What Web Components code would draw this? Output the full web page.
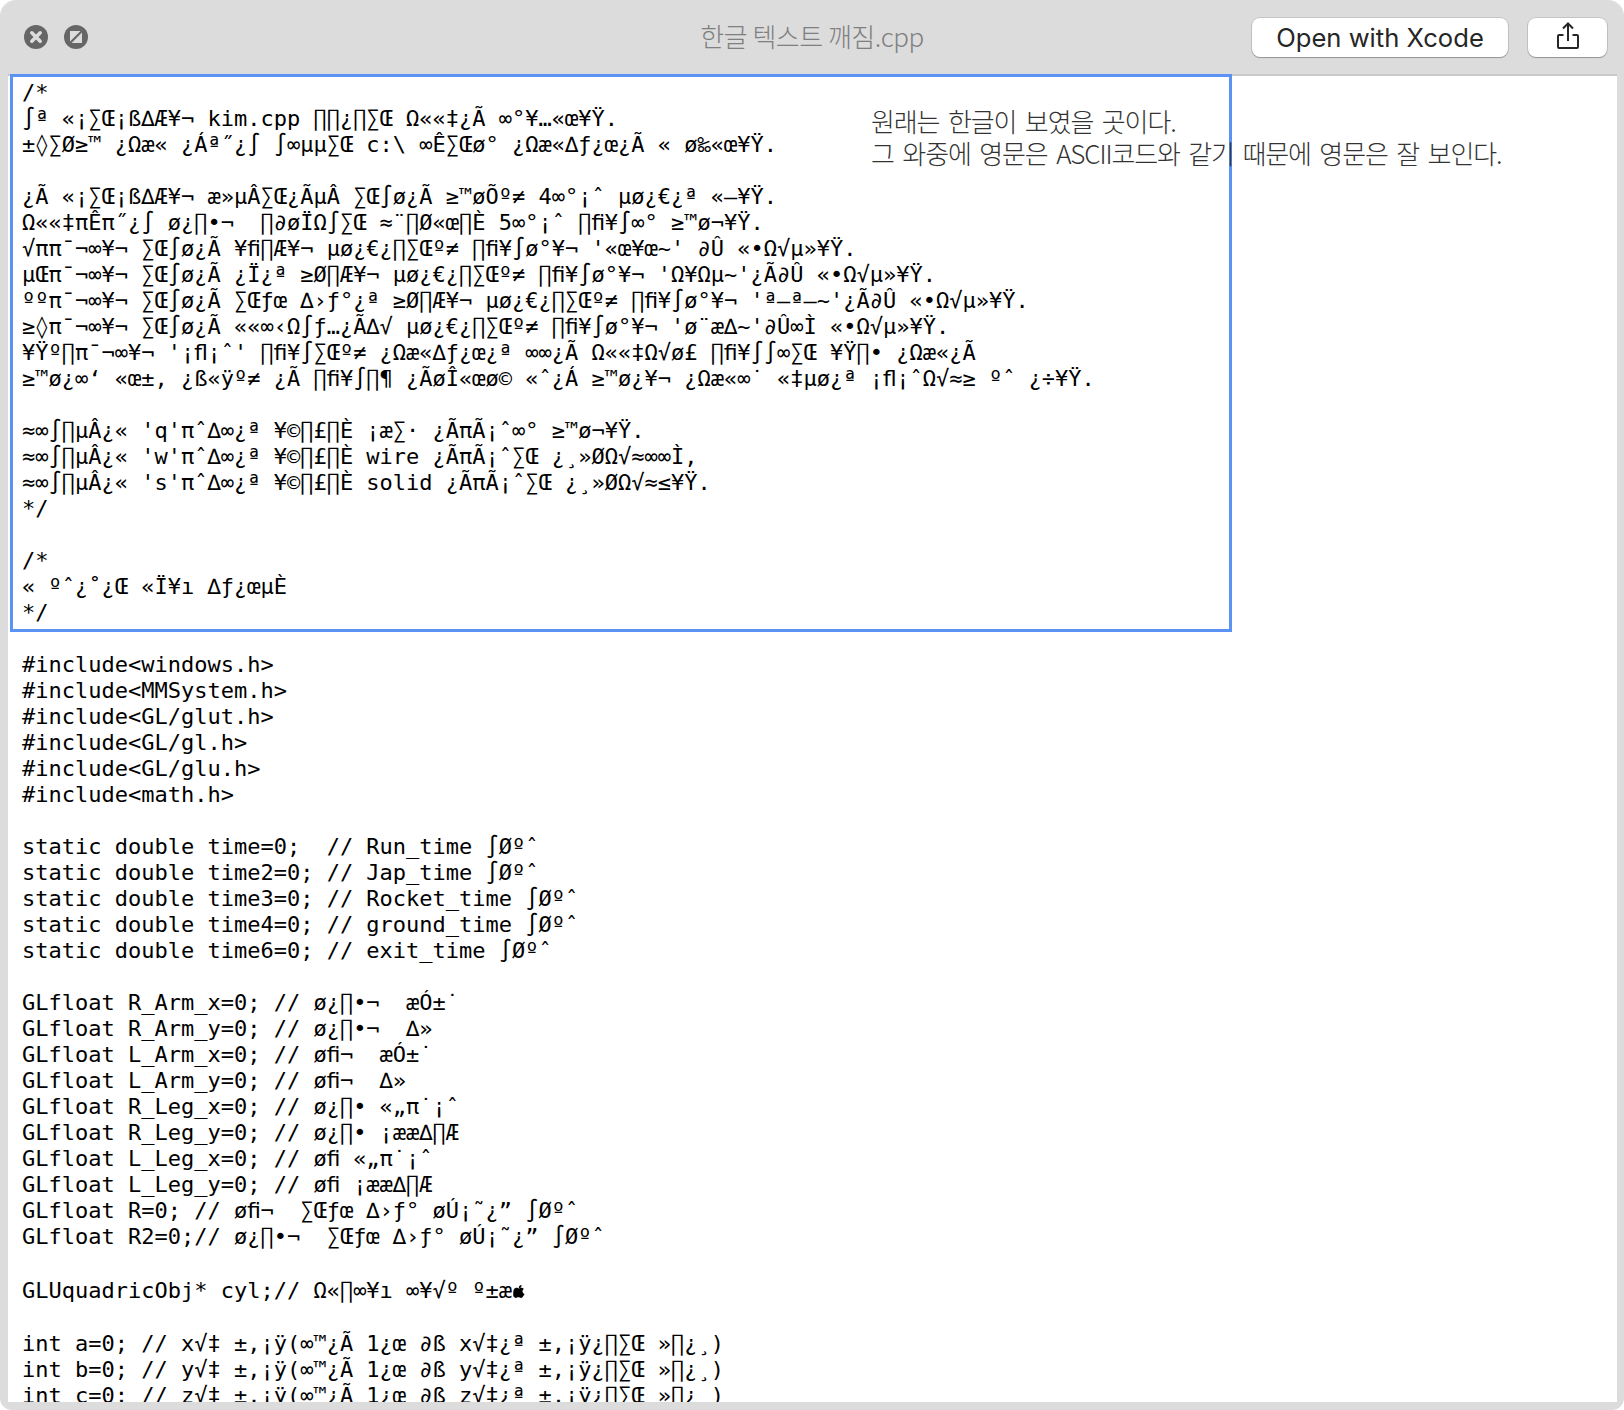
<!DOCTYPE html>
<html>
<head>
<meta charset="utf-8">
<title>한글 텍스트 깨짐.cpp</title>
<style>
  html, body { margin: 0; background: #fff; }
</style>
</head>
<body>
<ql-window name="한글 텍스트 깨짐.cpp">
  <source-pane>/*
∫ª «¡∑Œ¡ß∆Æ¥¬ kim.cpp ∏∏¿∏∑Œ Ω««‡¿Ã ∞°¥…«œ¥Ÿ.
±◊∑Ø≥™ ¿Ωæ« ¿Áª˝¿∫ ∫∞µµ∑Œ c:\ ∞Ê∑Œø° ¿Ωæ«∆ƒ¿œ¿Ã «&nbsp;ø‰«œ¥Ÿ.

¿Ã «¡∑Œ¡ß∆Æ¥¬ æ»µÂ∑Œ¿ÃµÂ ∑Œ∫ø¿Ã ≥™øÕº≠ 4∞°¡ˆ µø¿€¿ª «—¥Ÿ.
Ω««‡πÊπ˝¿∫ ø¿∏•¬&nbsp; ∏∂øÏΩ∫∑Œ ≈¨∏Ø«œ∏È 5∞°¡ˆ ∏ﬁ¥∫∞° ≥™ø¬¥Ÿ.
√ππ¯¬∞¥¬ ∑Œ∫ø¿Ã ¥ﬁ∏Æ¥¬ µø¿€¿∏∑Œº≠ ∏ﬁ¥∫ø°¥¬ '«œ¥œ~' ∂Û «•Ω√µ»¥Ÿ.
µŒπ¯¬∞¥¬ ∑Œ∫ø¿Ã ¿Ï¿ª ≥Ø∏Æ¥¬ µø¿€¿∏∑Œº≠ ∏ﬁ¥∫ø°¥¬ 'Ω¥Ωµ~'¿Ã∂Û «•Ω√µ»¥Ÿ.
ººπ¯¬∞¥¬ ∑Œ∫ø¿Ã ∑Œƒœ ∆›ƒ°¿ª ≥Ø∏Æ¥¬ µø¿€¿∏∑Œº≠ ∏ﬁ¥∫ø°¥¬ 'ª—ª—~'¿Ã∂Û «•Ω√µ»¥Ÿ.
≥◊π¯¬∞¥¬ ∑Œ∫ø¿Ã ««∞‹Ω∫ƒ…¿Ã∆√ µø¿€¿∏∑Œº≠ ∏ﬁ¥∫ø°¥¬ 'ø¨æ∆~'∂Û∞Ì «•Ω√µ»¥Ÿ.
¥Ÿº∏π¯¬∞¥¬ '¡ﬂ¡ˆ' ∏ﬁ¥∫∑Œº≠ ¿Ωæ«∆ƒ¿œ¿ª ∞∞¿Ã Ω««‡Ω√ø£ ∏ﬁ¥∫∫∞∑Œ ¥Ÿ∏• ¿Ωæ«¿Ã
≥™ø¿∞‘ «œ±‚ ¿ß«ÿº≠ ¿Ã ∏ﬁ¥∫∏¶ ¿ÃøÎ«œø© «ˆ¿Á ≥™ø¿¥¬ ¿Ωæ«∞˙ «‡µø¿ª ¡ﬂ¡ˆΩ√≈≥ ºˆ ¿÷¥Ÿ.

≈∞∫∏µÂ¿« 'q'πˆ∆∞¿ª ¥©∏£∏È ¡æ∑· ¿ÃπÃ¡ˆ∞° ≥™ø¬¥Ÿ.
≈∞∫∏µÂ¿« 'w'πˆ∆∞¿ª ¥©∏£∏È wire ¿ÃπÃ¡ˆ∑Œ ¿¸»ØΩ√≈∞∞Ì,
≈∞∫∏µÂ¿« 's'πˆ∆∞¿ª ¥©∏£∏È solid ¿ÃπÃ¡ˆ∑Œ ¿¸»ØΩ√≈≤¥Ÿ.
*/

/*
«&nbsp;ºˆ¿˚¿Œ «Ï¥ı ∆ƒ¿œµÈ
*/

#include&lt;windows.h&gt;
#include&lt;MMSystem.h&gt;
#include&lt;GL/glut.h&gt;
#include&lt;GL/gl.h&gt;
#include&lt;GL/glu.h&gt;
#include&lt;math.h&gt;

static double time=0;  // Run_time ∫Øºˆ
static double time2=0; // Jap_time ∫Øºˆ
static double time3=0; // Rocket_time ∫Øºˆ
static double time4=0; // ground_time ∫Øºˆ
static double time6=0; // exit_time ∫Øºˆ

GLfloat R_Arm_x=0; // ø¿∏•¬&nbsp; æÓ±˙
GLfloat R_Arm_y=0; // ø¿∏•¬&nbsp; ∆»
GLfloat L_Arm_x=0; // øﬁ¬&nbsp; æÓ±˙
GLfloat L_Arm_y=0; // øﬁ¬&nbsp; ∆»
GLfloat R_Leg_x=0; // ø¿∏• «„π˙¡ˆ
GLfloat R_Leg_y=0; // ø¿∏• ¡ææ∆∏Æ
GLfloat L_Leg_x=0; // øﬁ «„π˙¡ˆ
GLfloat L_Leg_y=0; // øﬁ ¡ææ∆∏Æ
GLfloat R=0; // øﬁ¬&nbsp; ∑Œƒœ ∆›ƒ° øÚ¡˜¿” ∫Øºˆ
GLfloat R2=0;// ø¿∏•¬&nbsp; ∑Œƒœ ∆›ƒ° øÚ¡˜¿” ∫Øºˆ

GLUquadricObj* cyl;// Ω«∏∞¥ı ∞¥√º º±æ<apple-mark></apple-mark>

int a=0; // x√‡ ±‚¡ÿ(∞™¿Ã 1¿œ ∂ß x√‡¿ª ±‚¡ÿ¿∏∑Œ »∏¿¸)
int b=0; // y√‡ ±‚¡ÿ(∞™¿Ã 1¿œ ∂ß y√‡¿ª ±‚¡ÿ¿∏∑Œ »∏¿¸)
int c=0; // z√‡ ±‚¡ÿ(∞™¿Ã 1¿œ ∂ß z√‡¿ª ±‚¡ÿ¿∏∑Œ »∏¿¸)</source-pane>
  <note-callout slot="over">원래는 한글이 보였을 곳이다.
그 와중에 영문은 ASCII코드와 같기 때문에 영문은 잘 보인다.</note-callout>
</ql-window>
<script>
class QlWindow extends HTMLElement {
  constructor() {
    super();
    this.attachShadow({mode: 'open'});
    this.shadowRoot.innerHTML = `
      <style>
        :host {
          display: flex;
          flex-direction: column;
          position: relative;
          height: 1410px;
          box-sizing: border-box;
          background: #dcdcdc;
          border-radius: 16px 16px 12px 12px;
          overflow: hidden;
        }
        .bar {
          display: grid;
          grid-template-columns: 1fr auto 1fr;
          align-items: center;
          height: 74px;
          flex: none;
          padding: 0 17px 0 24px;
          box-sizing: border-box;
        }
        .dots { display: flex; gap: 16px; }
        .name {
          color: #7f7f7f;
          font: 300 26px "Noto Sans CJK KR", "Noto Sans", sans-serif;
          letter-spacing: -0.5px;
          margin-right: 7px;
          position: relative;
          top: -2px;
        }
        .tools { display: flex; gap: 20px; justify-self: end; }
        .pane {
          flex: 1;
          min-height: 0;
          margin: 0 7px 8px 8px;
          border-top: 2px solid #c9c9c9;
          background: #fff;
          overflow: hidden;
        }
      </style>
      <div class="bar">
        <div class="dots">
          <round-icon kind="close"></round-icon>
          <round-icon kind="full"></round-icon>
        </div>
        <div class="name">${this.getAttribute('name')}</div>
        <div class="tools">
          <ql-button wide>Open with Xcode</ql-button>
          <ql-button><share-icon></share-icon></ql-button>
        </div>
      </div>
      <div class="pane"><slot></slot></div>
      <slot name="over"></slot>
    `;
  }
}

class RoundIcon extends HTMLElement {
  constructor() {
    super();
    this.attachShadow({mode: 'open'});
    const mark = this.getAttribute('kind') === 'close'
      ? '<path d="M7.800 7.800l8.400 8.400M16.200 7.800l-8.400 8.400" stroke="#dcdcdc" stroke-width="3.600" stroke-linecap="round"/>'
      : '<path d="M6 6H16.500L6 16.500zM18 18H7.500L18 7.500z" fill="#dcdcdc"/>';
    this.shadowRoot.innerHTML = `
      <style>:host { display: block; width: 24px; height: 24px; } svg { display: block; }</style>
      <svg width="24" height="24" viewBox="0 0 24 24"><circle cx="12" cy="12" r="12" fill="#666"/>${mark}</svg>
    `;
  }
}

class QlButton extends HTMLElement {
  constructor() {
    super();
    this.attachShadow({mode: 'open'});
    this.shadowRoot.innerHTML = `
      <style>
        :host {
          display: flex;
          align-items: center;
          justify-content: center;
          box-sizing: border-box;
          height: 39px;
          width: 79px;
          background: #fff;
          border-radius: 8px;
          box-shadow: 0 0 0 1px rgba(0,0,0,.1), 0 1px 1px rgba(0,0,0,.25);
          color: #262626;
          font: 25.600px Inter, "Noto Sans", sans-serif;
          white-space: nowrap;
        }
        :host([wide]) { width: 256px; }
      </style>
      <slot></slot>
    `;
  }
}

class ShareIcon extends HTMLElement {
  constructor() {
    super();
    this.attachShadow({mode: 'open'});
    this.shadowRoot.innerHTML = `
      <style>:host { display: block; width: 24px; height: 30px; } svg { display: block; }</style>
      <svg width="24" height="30" viewBox="0 0 24 30" fill="none" stroke="#262626" stroke-width="2">
        <path d="M7.500 13H3a1 1 0 0 0-1 1v11a1 1 0 0 0 1 1h18a1 1 0 0 0 1-1V14a1 1 0 0 0-1-1h-4.500"/>
        <path d="M12 19V1.500M7 6.500l5-5 5 5"/>
      </svg>
    `;
  }
}

class SourcePane extends HTMLElement {
  constructor() {
    super();
    this.attachShadow({mode: 'open'});
    this.shadowRoot.innerHTML = `
      <style>
        :host { display: block; }
        pre {
          margin: 0;
          padding: 4px 0 0 14px;
          color: #000;
          font: 22px/26px "DejaVu Sans Mono", monospace;
          font-variant-ligatures: none;
        }
      </style>
      <pre><slot></slot></pre>
    `;
  }
}

class AppleMark extends HTMLElement {
  constructor() {
    super();
    this.attachShadow({mode: 'open'});
    // white-space reset: the host sits inside a <pre>, the template's own newlines must not count
    // the margins make its line 3px taller, as the fallback font does in the original
    this.shadowRoot.innerHTML = `
      <style>
        :host {
          display: inline-block;
          white-space: normal;
          width: 12.500px;
          height: 14px;
          margin: 8.100px 0 6.900px .5px;
          vertical-align: -7.400px;
        }
        svg { display: block; }
      </style>
      <svg width="12.500" height="14" viewBox="0 0 13 16"><path d="M9.200 1c.1 1-.3 1.900-.9 2.600-.6.7-1.500 1.100-2.300 1-.1-.9.3-1.800.9-2.500C7.500 1.400 8.500 1 9.200 1zM12.500 11.400c-.4.9-.6 1.300-1.100 2-.7 1.100-1.700 2.500-3 2.500-1.100 0-1.400-.7-2.900-.7s-1.800.7-2.900.7c-1.200 0-2.100-1.200-2.900-2.300C-.4 10.500-.5 7.500.5 6c.7-1.100 1.800-1.700 2.900-1.700s1.800.7 2.800.7c.9 0 1.500-.7 2.900-.7 1 0 2 .5 2.700 1.400-2.400 1.300-2 4.700.7 5.700z"/></svg>
    `;
  }
}

class NoteCallout extends HTMLElement {
  constructor() {
    super();
    this.attachShadow({mode: 'open'});
    this.shadowRoot.innerHTML = `
      <style>
        :host { display: block; }
        .box {
          position: absolute;
          left: 10px;
          top: 74px;
          width: 1222px;
          height: 558px;
          box-sizing: border-box;
          border: 3px solid #5b93f5;
        }
        .caption {
          position: absolute;
          left: 871px;
          top: 105px;
          white-space: pre;
          color: #333;
          font: 300 26px/32px "Noto Sans CJK KR", "Noto Sans", sans-serif;
          letter-spacing: -1.12px;
          word-spacing: 3.9px;
        }
      </style>
      <div class="box"></div>
      <div class="caption"><slot></slot></div>
    `;
  }
}

customElements.define('round-icon', RoundIcon);
customElements.define('ql-button', QlButton);
customElements.define('share-icon', ShareIcon);
customElements.define('apple-mark', AppleMark);
customElements.define('source-pane', SourcePane);
customElements.define('note-callout', NoteCallout);
customElements.define('ql-window', QlWindow);
</script>
</body>
</html>
